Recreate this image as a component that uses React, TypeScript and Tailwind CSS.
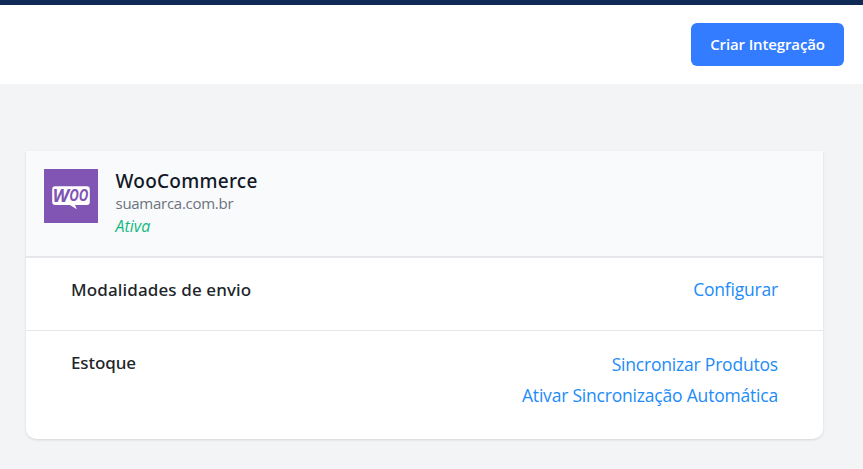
import type { ReactNode } from "react";

function WooLogo() {
  return (
    <svg className="size-[54px] shrink-0" viewBox="0 0 54 54" role="img" aria-label="WooCommerce">
      <rect width="54" height="54" fill="#8055b3" />
      <path
        d="M11.2 17.3h31.6a3 3 0 0 1 3 3v12.8a3 3 0 0 1-3 3H31l1.9 4.2-7-4.2H11.2a3 3 0 0 1-3-3V20.3a3 3 0 0 1 3-3Z"
        fill="#fff"
      />
      <g fill="#8055b3" fontFamily="Open Sans, sans-serif" fontWeight="700" fontStyle="italic">
        <text x="8.6" y="33.4" fontSize="18" textLength="16.4" lengthAdjust="spacingAndGlyphs">
          W
        </text>
        <text x="25.2" y="32.4" fontSize="16" textLength="19.2" lengthAdjust="spacingAndGlyphs">
          OO
        </text>
      </g>
    </svg>
  );
}

function ActionLink({ children }: { children: ReactNode }) {
  return (
    <a href="#" className="text-[17.5px] leading-[31px] tracking-[-0.2px] text-[#228bf8]">
      {children}
    </a>
  );
}

export default function App() {
  return (
    <div className="h-[469px] overflow-hidden bg-[#f3f4f6] font-['Open_Sans','Noto_Sans',sans-serif]">
      <header className="flex h-[84px] items-center justify-end border-t-[5px] border-[#0f2a55] bg-white pr-[19px]">
        <button className="h-[43px] w-[153px] rounded-md bg-[#337cff] text-[15px] font-semibold tracking-[-0.13px] text-white">
          Criar Integração
        </button>
      </header>

      <main className="pt-[67px] pr-10 pl-[26px]">
        <section className="h-[288px] overflow-hidden rounded-b-[10px] bg-white shadow">
          <div className="flex h-[107px] gap-[17.5px] border-b-2 border-[#e5e7eb] bg-[#f9fafb] px-[18px] pt-[18px]">
            <WooLogo />
            <div>
              <h2 className="font-['Noto_Sans'] text-[19px] leading-6 font-medium tracking-[0.27px] text-[#111827]">
                WooCommerce
              </h2>
              <p className="text-[15px] leading-[21px] tracking-[-0.27px] text-[#6b7280]">suamarca.com.br</p>
              <p className="text-base leading-6 text-[#10b981] italic">Ativa</p>
            </div>
          </div>

          <div className="flex h-[73px] justify-between border-b border-[#e5e7eb] px-[45px] pt-4">
            <h3 className="font-['Noto_Sans'] text-[17px] leading-[31px] font-medium tracking-[0.13px] text-[#212529]">
              Modalidades de envio
            </h3>
            <ActionLink>Configurar</ActionLink>
          </div>

          <div className="flex justify-between px-[45px] pt-4">
            <h3 className="font-['Noto_Sans'] text-[17px] leading-[31px] font-medium tracking-[-0.1px] text-[#212529]">
              Estoque
            </h3>
            <div className="flex flex-col items-end pt-0.5">
              <ActionLink>Sincronizar Produtos</ActionLink>
              <ActionLink>Ativar Sincronização Automática</ActionLink>
            </div>
          </div>
        </section>
      </main>
    </div>
  );
}
